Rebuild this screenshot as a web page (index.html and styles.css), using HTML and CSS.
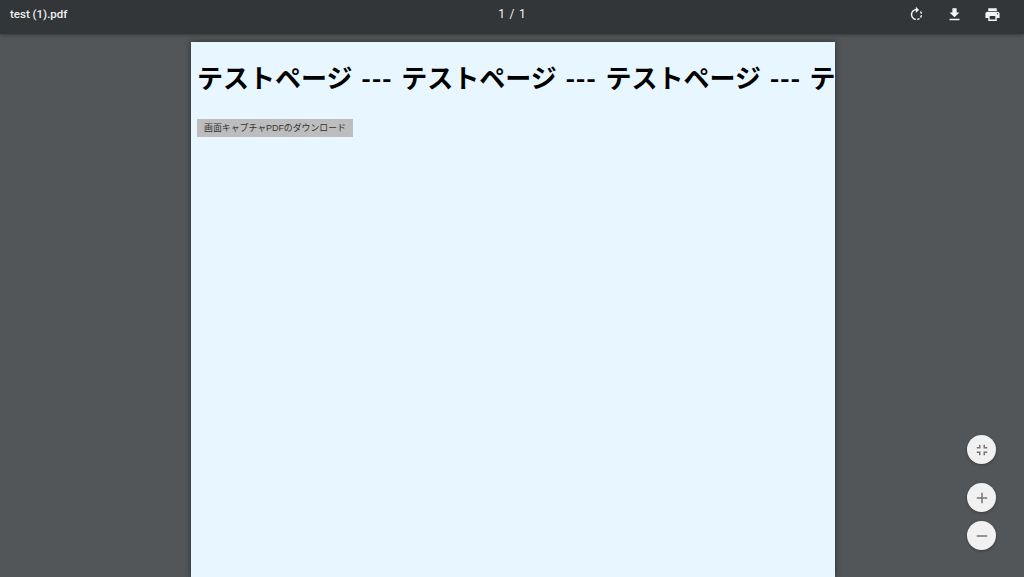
FILE: index.html
```html
<!DOCTYPE html>
<html lang="ja">
<head>
  <meta charset="UTF-8" />
  <meta name="viewport" content="width=device-width, initial-scale=1" />
  <title>test (1).pdf</title>
  <link rel="stylesheet" href="styles.css">
</head>
<body>

<header class="toolbar">
  <div class="file-name">test (1).pdf</div>
  <div class="page-count">1 / 1</div>
  <div class="tools">
    <svg class="tool" viewBox="0 0 24 24" fill="#fff"><path d="M15.55 5.55L11 1v3.07C7.06 4.56 4 7.92 4 12s3.05 7.44 7 7.93v-2.02c-2.84-.48-5-2.94-5-5.91s2.16-5.43 5-5.91V10l4.55-4.45zM19.93 11c-.17-1.39-.72-2.73-1.62-3.89l-1.42 1.42c.54.75.88 1.6 1.02 2.47h2.02zM13 17.9v2.02c1.39-.17 2.74-.71 3.9-1.61l-1.44-1.44c-.75.54-1.59.89-2.46 1.03zm3.89-2.42l1.42 1.41c.9-1.16 1.45-2.5 1.62-3.89h-2.02c-.14.87-.48 1.72-1.02 2.48z"/></svg>
    <svg class="tool" viewBox="0 0 24 24" fill="#fff"><path d="M19 9h-4V3H9v6H5l7 7 7-7zM5 18v2h14v-2H5z"/></svg>
    <svg class="tool" viewBox="0 0 24 24" fill="#fff"><path d="M19 8H5c-1.66 0-3 1.34-3 3v6h4v4h12v-4h4v-6c0-1.66-1.34-3-3-3zm-3 11H8v-5h8v5zm3-7c-.55 0-1-.45-1-1s.45-1 1-1 1 .45 1 1-.45 1-1 1zm-1-9H6v4h12V3z"/></svg>
  </div>
</header>

<main class="viewer">
  <div class="pdf-page">
    <h1>テストページ <span class="dash">---</span> テストページ <span class="dash">---</span> テストページ <span class="dash">---</span> テ</h1>
    <div class="capture-btn">画面キャプチャPDFのダウンロード</div>
  </div>

  <div class="zoom-btns">
    <div class="round-btn fit-btn">
      <svg viewBox="0 0 24 24" fill="#757575"><path d="M5 16h3v3h2v-5H5v2zm3-8H5v2h5V5H8v3zm6 11h2v-3h3v-2h-5v5zm2-11V5h-2v5h5V8h-3z"/></svg>
    </div>
    <div class="round-btn">
      <svg viewBox="0 0 24 24" fill="#757575"><path d="M19 13h-6v6h-2v-6H5v-2h6V5h2v6h6v2z"/></svg>
    </div>
    <div class="round-btn">
      <svg viewBox="0 0 24 24" fill="#757575"><path d="M19 13H5v-2h14v2z"/></svg>
    </div>
  </div>
</main>

</body>
</html>
```

FILE: styles.css
```css
html, body {
  height: 100%;
}
body {
  margin: 0;
  background: #525659;
  font-family: "Roboto", "Noto Sans CJK JP", sans-serif;
  overflow: hidden;
  display: flex;
  flex-direction: column;
}
.toolbar {
  height: 34px;
  flex: none;
  display: grid;
  grid-template-columns: 1fr auto 1fr;
  align-items: center;
  padding: 0 10px 6px;
  box-sizing: border-box;
  background: #323639;
  color: #f1f1f1;
  box-shadow: 0 1px 3px rgba(0, 0, 0, 0.35);
  position: relative;
}
.file-name {
  font-size: 11.5px;
  font-weight: 500;
}
.page-count {
  font-size: 12px;
  word-spacing: 1.5px;
}
.tools {
  display: flex;
  justify-content: flex-end;
  gap: 21px;
  padding-right: 13px;
}
.tool {
  width: 17px;
  height: 17px;
  opacity: 0.95;
}
.viewer {
  flex: 1;
  min-height: 0;
  position: relative;
  display: flex;
  justify-content: center;
  padding: 8px 0 0 2px;
}
.pdf-page {
  width: 644px;
  flex: none;
  background: #e8f6ff;
  box-shadow: 0 0 6px rgba(0, 0, 0, 0.45);
  overflow: hidden;
  padding: 0 0 0 6px;
  box-sizing: border-box;
}
h1 {
  margin: 20px 0 0;
  font-family: "Liberation Sans", "Noto Sans CJK JP", sans-serif;
  font-size: 26px;
  font-weight: bold;
  line-height: 34px;
  color: #000;
  white-space: nowrap;
  word-spacing: 1.5px;
}
.dash {
  font-family: "Noto Sans CJK JP", sans-serif;
  line-height: 1;
  letter-spacing: 0.8px;
}
.capture-btn {
  width: 156px;
  height: 18px;
  margin-top: 23px;
  background: #bdbdbd;
  color: #333;
  font-family: "Liberation Sans", "Noto Sans CJK JP", sans-serif;
  font-size: 8.9px;
  line-height: 18px;
  text-align: center;
}
.zoom-btns {
  position: absolute;
  right: 28px;
  bottom: 27px;
  display: flex;
  flex-direction: column;
  gap: 9px;
}
.round-btn {
  width: 29px;
  height: 29px;
  border-radius: 50%;
  background: #f1f1f1;
  box-shadow: 0 1px 3px rgba(0, 0, 0, 0.3);
  display: flex;
  align-items: center;
  justify-content: center;
}
.round-btn svg {
  width: 18px;
  height: 18px;
}
.fit-btn {
  margin-bottom: 10px;
}
```
